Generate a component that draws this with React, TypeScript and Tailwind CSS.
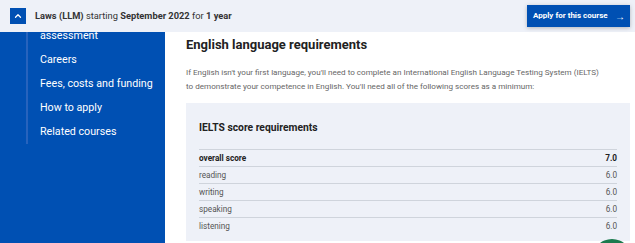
import { ChevronUp } from "lucide-react";

const scores = [
  { label: "overall score", value: "7.0", strong: true },
  { label: "reading", value: "6.0" },
  { label: "writing", value: "6.0" },
  { label: "speaking", value: "6.0" },
  { label: "listening", value: "6.0" },
];

const nav = ["assessment", "Careers", "Fees, costs and funding", "How to apply", "Related courses"];

export default function App() {
  return (
    <div className="relative h-[243px] w-[635px] overflow-hidden bg-white font-['Roboto',sans-serif]">
      <header className="flex h-[32px] items-center justify-between bg-[#eef1f8] pl-[10px] pr-[5px]">
        <div className="flex items-center gap-[9px]">
          <button className="flex h-[16px] w-[16px] items-center justify-center bg-[#0050b3] text-white">
            <ChevronUp size={10} strokeWidth={3} />
          </button>
          <p className="whitespace-nowrap text-[9.3px] text-[#333]">
            <span className="font-bold">Laws (LLM)</span> starting{" "}
            <span className="font-bold">September 2022</span> for{" "}
            <span className="font-bold">1 year</span>
          </p>
        </div>
        <button className="flex h-[22px] w-[103px] items-center justify-between whitespace-nowrap bg-[#0050b3] pl-[6px] pr-[5px] text-[8px] font-bold text-white shadow-[0_1px_4px_rgba(0,0,0,0.25)]">
          <span>Apply for this course</span>
          <span className="text-[10px] font-normal">→</span>
        </button>
      </header>

      <div className="flex h-[211px]">
        <aside className="w-[165px] shrink-0 overflow-hidden bg-[#0050b3]">
          <ul className="ml-[26px] -mt-[8px] border-l-2 border-[#2763bd] pl-[12px]">
            {nav.map((item) => (
              <li key={item} className="h-[24px] whitespace-nowrap text-[10.7px] leading-[24px] text-white">
                {item}
              </li>
            ))}
          </ul>
        </aside>

        <main className="flex-1 pl-[21px] pr-[5px] pt-[3px]">
          <h2 className="text-[13px] font-bold leading-[20px] text-[#222]">
            English language requirements
          </h2>
          <p className="mt-[10px] w-[420px] text-[8.1px] leading-[14px] text-[#666]">
            If English isn't your first language, you'll need to complete an International English Language Testing System (IELTS) to demonstrate your competence in English. You'll need all of the following scores as a minimum:
          </p>

          <div className="mt-[10px] bg-[#eef1f8] px-[13px] pb-[6px] pt-[17px]">
            <h3 className="text-[10.3px] font-bold leading-[16px] text-[#222]">IELTS score requirements</h3>
            <table className="mt-[13px] w-full text-[8.2px]">
              <tbody>
                {scores.map((s) => (
                  <tr key={s.label} className="h-[17px] border-t border-[#cfd4dc]">
                    <td className={s.strong ? "font-bold text-[#222]" : "text-[#555]"}>{s.label}</td>
                    <td className={`text-right ${s.strong ? "font-bold text-[#222]" : "text-[#555]"}`}>
                      {s.value}
                    </td>
                  </tr>
                ))}
              </tbody>
            </table>
          </div>
        </main>
      </div>

      <div className="absolute left-[592px] top-[239px] h-[40px] w-[40px] rounded-full bg-[#1b7a4e]" />
    </div>
  );
}
